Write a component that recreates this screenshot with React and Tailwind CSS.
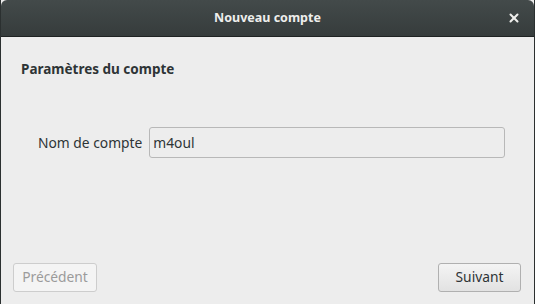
import { X } from 'lucide-react';

const App = () => {
  return (
    <div
      className="w-[535px] h-[304px] flex flex-col bg-[#ededed] border-x border-[#2b3030] text-[13.8px] text-[#2e3436]"
      style={{ fontFamily: '"Noto Sans", "Open Sans", sans-serif' }}
    >
      <header className="h-[37px] shrink-0 relative flex items-center justify-center rounded-t-[6px] bg-gradient-to-b from-[#434a4a] to-[#363c3c] border-b border-[#1f2323]">
        <span className="font-bold text-[#eeeeec] text-[12.5px]">Nouveau compte</span>
        <button className="absolute right-[13px] top-[11px] text-[#eeeeec]">
          <X className="w-[14px] h-[14px]" strokeWidth={3.5} />
        </button>
      </header>
      <main className="flex-1 flex flex-col">
        <h2 className="mt-[23px] ml-[20px] font-bold text-[13.5px] leading-[18px]">Paramètres du compte</h2>
        <div className="mt-[49px] ml-[37px] flex items-center gap-[7px]">
          <label className="leading-[18px]">Nom de compte</label>
          <input
            defaultValue="m4oul"
            className="w-[356px] h-[31px] px-[3px] rounded-[3px] border border-[#b8b8b8] bg-[#ededed] text-[#2e3436] outline-none"
          />
        </div>
        <div className="mt-auto mb-[12px] px-[12px] flex justify-between">
          <button className="w-[84px] h-[29px] rounded-[3px] border border-[#cdcdcd] bg-[#f4f4f4] text-[#9b9b9b]">
            Précédent
          </button>
          <button className="w-[83px] h-[29px] rounded-[3px] border border-[#b0b0b0] bg-gradient-to-b from-[#f4f4f4] to-[#e2e2e2] text-[#2e3436] mr-[1px]">
            Suivant
          </button>
        </div>
      </main>
    </div>
  );
};

export default App;
